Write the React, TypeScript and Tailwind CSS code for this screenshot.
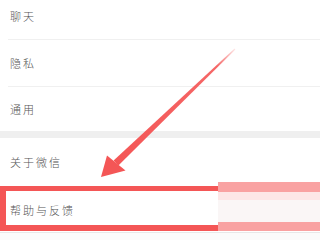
import React from "react";

const font = { fontFamily: '"Noto Sans CJK SC", "Noto Sans", sans-serif' };

function Row({ label, h }: { label: string; h: string }) {
  return (
    <div className={`flex items-center pl-[10px] ${h}`}>
      <span className="text-[11px] tracking-[2px] text-[#555] font-light leading-none">{label}</span>
    </div>
  );
}

function Divider() {
  return <div className="h-px ml-[8px] bg-[#f0f0f0]" />;
}

export default function App() {
  return (
    <div className="relative w-[320px] h-[240px] overflow-hidden bg-white" style={font}>
      <div className="-mt-[7px] flex flex-col">
        <Row label="聊天" h="h-[46px]" />
        <Divider />
        <Row label="隐私" h="h-[46px]" />
        <Divider />
        <Row label="通用" h="h-[44px]" />
        <div className="h-[7px] bg-[#efefef]" />
        <Row label="关于微信" h="h-[49px]" />
        <Divider />
        <Row label="帮助与反馈" h="h-[44px]" />
        <div className="h-px bg-[#e8e8e8]" />
        <div className="h-[20px] bg-[#fbfbfb]" />
      </div>

      {/* red highlight rectangle */}
      <div className="absolute left-0 top-[186px] w-[218px] h-[45px] border-t-[5px] border-b-[6px] border-l-[6px] border-[#f45656]" />
      {/* faded right part */}
      <div className="absolute left-[218px] top-[182px] w-[102px] h-[10px] bg-[#f9a2a2]" />
      <div className="absolute left-[218px] top-[192px] w-[102px] h-[8px] bg-[#fde7e7]" />
      <div className="absolute left-[218px] top-[200px] w-[102px] h-[22px] bg-[#faf6f6]" />
      <div className="absolute left-[218px] top-[222px] w-[102px] h-[9px] bg-[#f9a2a2]" />

      {/* arrow */}
      <svg className="absolute left-0 top-0" width="320" height="240" viewBox="0 0 320 240">
        <defs>
          <linearGradient id="g" x1="235" y1="49" x2="116" y2="163" gradientUnits="userSpaceOnUse">
            <stop offset="0" stopColor="#f45656" stopOpacity="0.15" />
            <stop offset="0.15" stopColor="#f45656" stopOpacity="0.9" />
            <stop offset="1" stopColor="#f45656" stopOpacity="1" />
          </linearGradient>
        </defs>
        <polygon points="235.4,49.4 234.6,48.6 113.6,160.6 118.4,165.4" fill="url(#g)" />
        <polygon points="101,177 107,155.5 125.5,170.5" fill="#f45656" />
      </svg>
    </div>
  );
}
